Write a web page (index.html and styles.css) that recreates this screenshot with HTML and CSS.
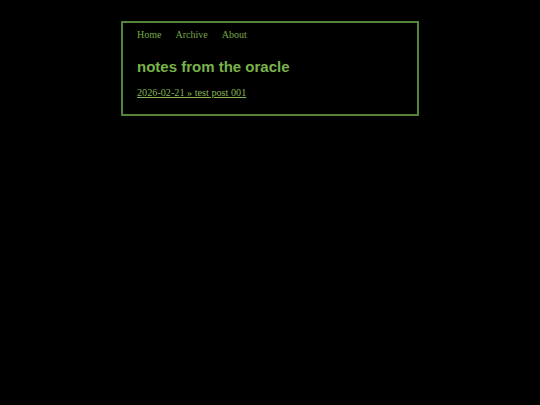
FILE: index.html
```html
<!DOCTYPE html>
<html>
<head>
<meta charset="utf-8">
<link rel="stylesheet" href="styles.css">
</head>
<body>
<div class="box">
  <nav class="nav">
    <a href="#">Home</a>
    <a href="#">Archive</a>
    <a href="#">About</a>
  </nav>
  <h1 class="title">notes from the oracle</h1>
  <ul class="posts">
    <li><a href="#" class="post">2026-02-21 » test post 001</a></li>
  </ul>
</div>
</body>
</html>
```
FILE: styles.css
```css
html, body {
  margin: 0;
  padding: 0;
  background: #000;
}
body {
  padding-top: 21px;
  font-family: "Liberation Serif", serif;
  color: #76a845;
}
.box {
  width: 266px;
  margin: 0 auto;
  border: 2px solid #54843a;
  padding: 4px 14px 14px 14px;
  height: 73px;
}
.nav {
  display: flex;
  gap: 14px;
  font-size: 10px;
  line-height: 16px;
}
.nav a {
  color: #76a845;
  text-decoration: none;
}
.title {
  font-family: "Liberation Sans", Arial, sans-serif;
  font-weight: bold;
  font-size: 15px;
  line-height: 18px;
  margin: 15px 0 0 0;
  color: #79b24a;
}
.posts {
  list-style: none;
  margin: 10px 0 0 0;
  padding: 0;
  font-size: 10.2px;
  line-height: 14px;
}
.post {
  color: #86b452;
  text-decoration: underline;
}
```
